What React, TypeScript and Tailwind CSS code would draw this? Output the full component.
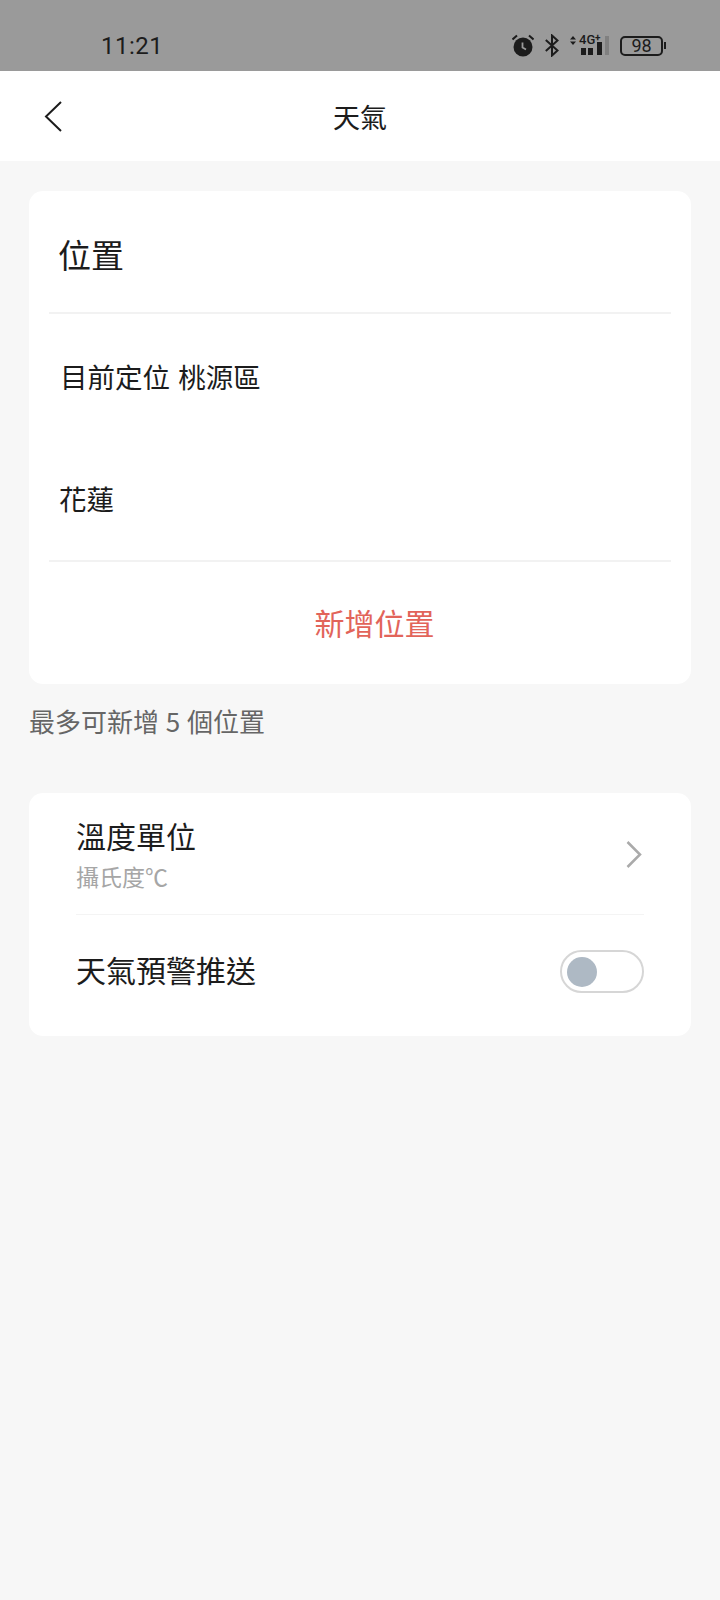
import React from 'react';

const CJK = "font-['Noto_Sans_CJK_TC','Noto_Sans_CJK_JP',sans-serif]";

const StatusIcons: React.FC = () => (
  <div className="flex items-center">
    {/* alarm */}
    <svg width="22" height="23" viewBox="0 0 22 23" className="mr-[11px]">
      <circle cx="11" cy="13" r="9.5" fill="#1c1c1c" />
      <path d="M0.5 5.5 L5 1.5 M21.5 5.5 L17 1.5" stroke="#1c1c1c" strokeWidth="2" fill="none" />
      <path d="M10.5 8.5 V13.5 L14 15.5" stroke="#9a9a9a" strokeWidth="1.8" fill="none" />
    </svg>
    {/* bluetooth */}
    <svg width="14" height="23" viewBox="0 0 14 23" className="mr-[11px]">
      <path d="M0.8 6 L12.5 16.5 L7 21.5 V1.5 L12.5 6.5 L0.8 17" stroke="#1c1c1c" strokeWidth="2" fill="none" />
    </svg>
    {/* signal */}
    <div className="relative w-[40px] h-[20px] mr-[10px]">
      <svg width="40" height="20" viewBox="0 0 40 20" className="absolute left-0 top-0">
        <path d="M0 3.5 L3 0 L6 3.5 Z M0 5.5 L3 9 L6 5.5 Z" fill="#1c1c1c" />
        <rect x="11" y="12" width="5" height="7" fill="#1c1c1c" />
        <rect x="18" y="12" width="5" height="7" fill="#1c1c1c" />
        <rect x="27" y="6" width="5" height="13" fill="#1c1c1c" />
        <rect x="35" y="0" width="4" height="19" fill="#808080" />
      </svg>
      <span className="absolute left-[9px] top-[-3px] text-[13px] leading-[14px] font-medium text-[#1c1c1c] font-['Roboto',sans-serif]">4G</span>
      <span className="absolute left-[25px] top-[-4px] text-[10px] leading-[12px] font-bold text-[#1c1c1c] font-['Roboto',sans-serif]">+</span>
    </div>
    {/* battery */}
    <div className="flex items-center">
      <div className="w-[43px] h-[20px] rounded-[5px] border-2 border-[#1c1c1c] flex items-center justify-center text-[18px] font-normal text-[#1c1c1c] font-['Roboto',sans-serif]">
        98
      </div>
      <div className="w-[2px] h-[7px] ml-[1px] bg-[#1c1c1c]" />
    </div>
  </div>
);

export default function App() {
  return (
    <div className={`w-[720px] h-[1600px] bg-[#f7f7f7] ${CJK}`}>
      <div className="h-[71px] bg-[#9a9a9a] flex items-center justify-between pl-[101px] pr-[54px] pt-[20px]">
        <span className="text-[24px] leading-none text-[#1c1c1c] font-['Roboto',sans-serif] tracking-[0.5px]">11:21</span>
        <StatusIcons />
      </div>

      <header className="relative h-[90px] bg-white flex items-center justify-center">
        <svg width="20" height="32" viewBox="0 0 20 32" className="absolute left-[44px] top-[30px]">
          <path d="M17 1 L2 15.5 L17 30" stroke="#1c1c1c" strokeWidth="2" fill="none" />
        </svg>
        <h1 className="text-[27px] leading-none font-normal text-[#1c1c1c]">天氣</h1>
      </header>

      <div className="px-[29px] pt-[30px]">
        <section className="bg-white rounded-[14px] h-[493px] px-[20px] flex flex-col">
          <div className="h-[123px] flex items-center pl-[9px] pt-[5px] border-b-2 border-[#f2f2f2]">
            <h2 className="text-[33px] leading-none font-normal text-[#1c1c1c]">位置</h2>
          </div>
          <div className="h-[122px] flex items-center pl-[11px] pt-[3px] text-[27.5px] leading-none text-[#1c1c1c] [word-spacing:2px]">
            目前定位 桃源區
          </div>
          <div className="h-[126px] flex items-center pl-[10px] pt-[2px] border-b-2 border-[#f2f2f2] text-[27.5px] leading-none text-[#1c1c1c]">
            花蓮
          </div>
          <div className="flex-1 flex items-center justify-center pl-[29px] pb-[2px] text-[30px] leading-none text-[#e2645a]">
            新增位置
          </div>
        </section>

        <p className="mt-[24px] text-[26px] leading-none text-[#666666] [word-spacing:1px]">最多可新增 5 個位置</p>

        <section className="mt-[59px] bg-white rounded-[14px] h-[243px] px-[47px]">
          <div className="h-[122px] flex items-center justify-between border-b border-[#f4f4f4]">
            <div className="pt-[1px]">
              <div className="text-[30px] leading-none text-[#1c1c1c]">溫度單位</div>
              <div className="mt-[15px] text-[23px] leading-none text-[#a6a6a6]">攝氏度℃</div>
            </div>
            <svg width="16" height="27" viewBox="0 0 16 27" className="mr-[2px] mt-[2px]">
              <path d="M1.5 1 L14 13.5 L1.5 26" stroke="#aaaaaa" strokeWidth="2.5" fill="none" />
            </svg>
          </div>
          <div className="h-[113px] flex items-center justify-between">
            <div className="mb-[6px] text-[30px] leading-none text-[#1c1c1c]">天氣預警推送</div>
            <div className="w-[84px] h-[43px] rounded-full border-2 border-[#d6d6d6] flex items-center pl-[5px]">
              <div className="w-[30px] h-[30px] rounded-full bg-[#aeb9c4]" />
            </div>
          </div>
        </section>
      </div>
    </div>
  );
}
